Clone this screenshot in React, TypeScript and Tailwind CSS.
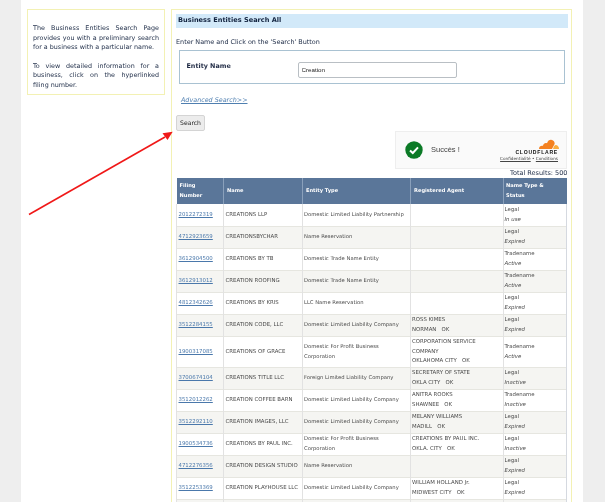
const rows: [string, string, string[], string[], string, string, string][] = [
  ["2012272319", "CREATIONS LLP", ["Domestic Limited Liability Partnership"], [], "Legal", "In use", "h-[22px]"],
  ["4712923659", "CREATIONSBYCHAR", ["Name Reservation"], [], "Legal", "Expired", "h-[22px]"],
  ["3612904500", "CREATIONS BY TB", ["Domestic Trade Name Entity"], [], "Tradename", "Active", "h-[22px]"],
  ["3612913012", "CREATION ROOFING", ["Domestic Trade Name Entity"], [], "Tradename", "Active", "h-[22px]"],
  ["4812342626", "CREATIONS BY KRIS", ["LLC Name Reservation"], [], "Legal", "Expired", "h-[22px]"],
  ["3512284155", "CREATION CODE, LLC", ["Domestic Limited Liability Company"], ["ROSS KIMES", "NORMAN   OK"], "Legal", "Expired", "h-[22px]"],
  ["1900317085", "CREATIONS OF GRACE", ["Domestic For Profit Business", "Corporation"], ["CORPORATION SERVICE", "COMPANY", "OKLAHOMA CITY   OK"], "Tradename", "Active", "h-[31px]"],
  ["3700674104", "CREATIONS TITLE LLC", ["Foreign Limited Liability Company"], ["SECRETARY OF STATE", "OKLA CITY   OK"], "Legal", "Inactive", "h-[22px]"],
  ["3512012262", "CREATION COFFEE BARN", ["Domestic Limited Liability Company"], ["ANITRA ROOKS", "SHAWNEE   OK"], "Tradename", "Inactive", "h-[22px]"],
  ["3512292110", "CREATION IMAGES, LLC", ["Domestic Limited Liability Company"], ["MELANY WILLIAMS", "MADILL   OK"], "Legal", "Expired", "h-[22px]"],
  ["1900534736", "CREATIONS BY PAUL INC.", ["Domestic For Profit Business", "Corporation"], ["CREATIONS BY PAUL INC.", "OKLA. CITY   OK"], "Legal", "Inactive", "h-[22px]"],
  ["4712276356", "CREATION DESIGN STUDIO", ["Name Reservation"], [], "Legal", "Expired", "h-[22px]"],
  ["3512253369", "CREATION PLAYHOUSE LLC", ["Domestic Limited Liability Company"], ["WILLIAM HOLLAND Jr.", "MIDWEST CITY   OK"], "Legal", "Expired", "h-[22px]"],
  ["", "", [""], [], "", "", "h-[22px]"],
];

const font = "font-['DejaVu_Sans','Liberation_Sans',sans-serif]";
const just = "[text-align-last:justify]";

export default function App() {
  return (
    <div className={`relative w-[605px] h-[502px] overflow-hidden bg-[#eeeeee] ${font} blur-[0.4px]`}>
      <div className="ml-[21px] w-[562px] h-[502px] bg-white flex items-start pl-[6px] pt-[9px] gap-[6px]">
        <aside className="w-[138px] h-[86px] shrink-0 border border-[#f3f1b4] pt-[14px] px-[5px] text-[6.4px] leading-[9.7px] text-[#24324c]">
          <div className={just}>The Business Entities Search Page</div>
          <div className={just}>provides you with a preliminary search</div>
          <div>for a business with a particular name.</div>
          <div className={`mt-[8.5px] ${just}`}>To view detailed information for a</div>
          <div className={just}>business, click on the hyperlinked</div>
          <div>filing number.</div>
        </aside>
        <main className="w-[401px] h-[520px] shrink-0 border border-b-0 border-[#f3f1b4] pt-[4px] pl-[4px] pr-[3.5px]">
          <div className="h-[14px] bg-[#d2e9f9] flex items-center pl-[2px] text-[6.6px] font-bold text-[#12233f]">
            Business Entities Search All
          </div>
          <p className="mt-[9.5px] text-[6.45px] leading-[9px] text-[#24324c]">Enter Name and Click on the 'Search' Button</p>
          <div className="mt-[3px] ml-[2.5px] mr-[2.5px] h-[34.5px] border border-[#a9c2d2] flex items-center pl-[7px]">
            <span className="w-[111px] text-[6.4px] font-bold text-[#1f2a44]">Entity Name</span>
            <input
              readOnly
              value="Creation"
              className="mt-[6px] w-[159.5px] h-[16px] border border-[#b9bfc4] rounded-[2px] bg-white pl-[3px] text-[6.2px] text-[#222] outline-none font-['Liberation_Sans',sans-serif]"
            />
          </div>
          <a className="block mt-[12px] ml-[5px] text-[6.4px] leading-[9px] italic underline text-[#4f7fb0]">Advanced Search&gt;&gt;</a>
          <button className="block mt-[9.5px] w-[29px] h-[16.5px] bg-[#ececec] border border-[#d4d4d4] rounded-[2px] text-[6.1px] text-[#222]">
            Search
          </button>
          <div className="ml-[219px] h-[38px] w-[172px] bg-[#fafafa] border border-[#eeeeee] flex items-center justify-between pl-[9px] pr-[8px]">
            <div className="flex items-center gap-[8px]">
              <svg width="18" height="18" viewBox="0 0 18 18">
                <circle cx="9" cy="9" r="8.7" fill="#0b7a26" />
                <path d="M5 9.4 L7.8 12 L13 6.4" fill="none" stroke="#fff" strokeWidth="2" />
              </svg>
              <span className="text-[7.5px] text-[#444] font-['Liberation_Sans',sans-serif]">Succès !</span>
            </div>
            <div className="flex flex-col items-end">
              <svg width="21" height="10" viewBox="0 0 21 10" className="-mr-[0.5px]">
                <path d="M1 10 C1 7 3 6.5 5 6.8 C5.5 4 7.5 3.5 9 4.2 C10 1 13 0 15 1.5 C16.5 2.6 16.8 4 16.6 5 L14 10 Z" fill="#f48120" />
                <path d="M15 10 C15.5 7.5 17 5.8 18 6 C20 6.5 21 8 21 10 Z" fill="#faad3f" />
              </svg>
              <span className="text-[5.1px] leading-[6px] font-bold tracking-[0.75px] text-[#111] font-['Liberation_Sans',sans-serif]">CLOUDFLARE</span>
              <span className="text-[4.2px] leading-[7px] text-[#444] whitespace-nowrap">
                <u>Confidentialité</u> • <u>Conditions</u>
              </span>
            </div>
          </div>
          <p className="text-right text-[6.5px] leading-[9px] text-[#24324c] whitespace-nowrap">Total Results: 500</p>
          <table className="w-[390px] table-fixed border-collapse text-[5.4px] leading-[9.6px] text-[#4a4a4a]">
            <colgroup>
              <col className="w-[47px]" />
              <col className="w-[79px]" />
              <col className="w-[108px]" />
              <col className="w-[93px]" />
              <col className="w-[63px]" />
            </colgroup>
            <thead>
              <tr className="h-[26px] bg-[#5a7699] text-white font-bold text-left text-[5.1px]">
                <th className="pl-[3px] border-r border-[#8aa0bb]">Filing<br />Number</th>
                <th className="pl-[3px] border-r border-[#8aa0bb]">Name</th>
                <th className="pl-[3px] border-r border-[#8aa0bb]">Entity Type</th>
                <th className="pl-[3px] border-r border-[#8aa0bb]">Registered Agent</th>
                <th className="pl-[2px]">Name Type &amp;<br />Status</th>
              </tr>
            </thead>
            <tbody>
              {rows.map((r, i) => (
                <tr key={i} className={`${r[6]} border-b border-[#e6e6e0] ${i % 2 ? "bg-[#f5f5f2]" : "bg-white"}`}>
                  <td className="pl-[1.5px] border-l border-r border-[#e2e2e2] text-[#4a78ab] underline">{r[0]}</td>
                  <td className="pl-[1.5px] border-r border-[#e2e2e2] whitespace-nowrap overflow-hidden">{r[1]}</td>
                  <td className="pl-[1px] border-r border-[#e2e2e2] whitespace-nowrap text-[5.25px]">{r[2].map((t, j) => <div key={j}>{t}</div>)}</td>
                  <td className="pl-[1px] border-r border-[#e2e2e2] whitespace-pre">{r[3].map((t, j) => <div key={j}>{t}</div>)}</td>
                  <td className="pl-[0.5px] border-r border-[#d5d9e0]">
                    <div>{r[4]}</div>
                    <div className="italic">{r[5]}</div>
                  </td>
                </tr>
              ))}
            </tbody>
          </table>
        </main>
      </div>
      <svg className="absolute left-0 top-0 pointer-events-none" width="605" height="502" viewBox="0 0 605 502">
        <line x1="29" y1="214.5" x2="165" y2="137" stroke="#f01818" strokeWidth="1.6" />
        <path d="M172.7 131.7 L162.5 133.2 L167.5 140 Z" fill="#f01818" />
      </svg>
    </div>
  );
}
